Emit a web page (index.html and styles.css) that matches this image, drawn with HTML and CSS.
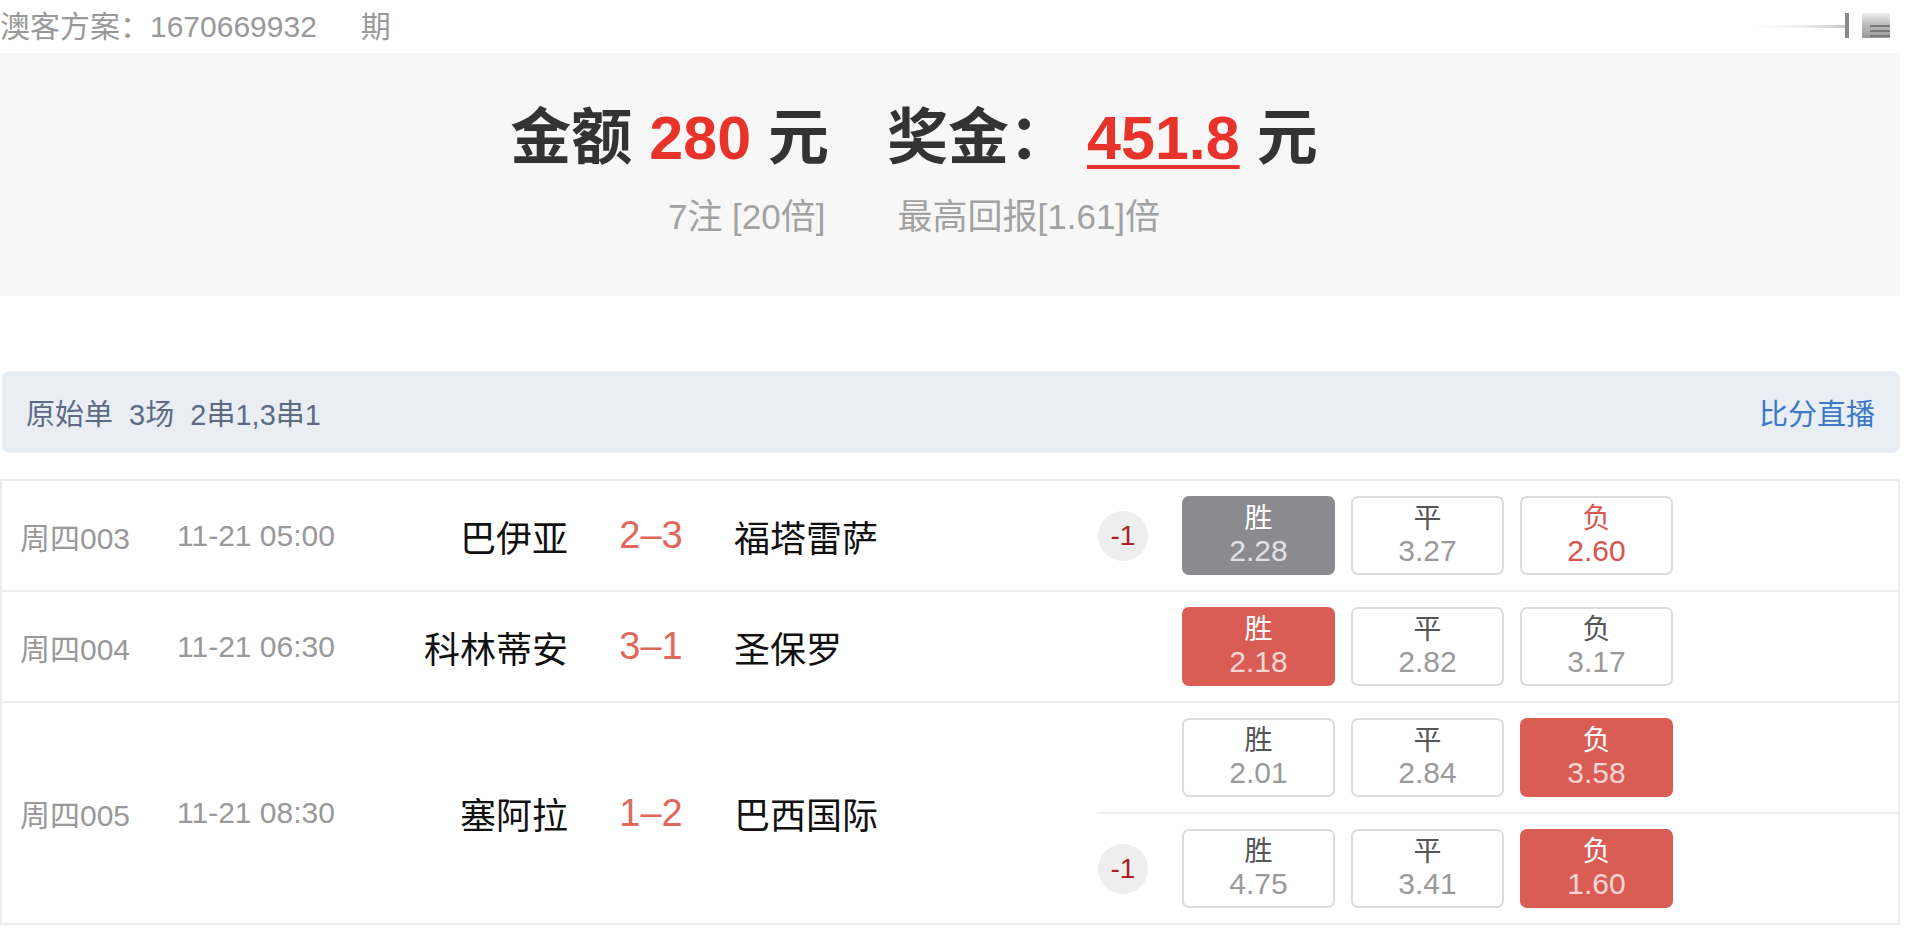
FILE: index.html
```html
<!DOCTYPE html>
<html lang="zh-CN">
<head>
<meta charset="utf-8">
<title>澳客方案</title>
<link rel="stylesheet" href="styles.css">
</head>
<body>
<div class="page">
  <div class="topbar">
    <span class="plan">澳客方案：1670669932</span><span class="period">期</span>
    <svg class="corner-icon" width="160" height="40" viewBox="0 0 160 40" aria-hidden="true">
      <defs>
        <linearGradient id="fade" x1="0" x2="1" y1="0" y2="0">
          <stop offset="0" stop-color="#ffffff" stop-opacity="0"/>
          <stop offset="1" stop-color="#c8c8c8"/>
        </linearGradient>
        <linearGradient id="blk" x1="0" x2="0" y1="0" y2="1">
          <stop offset="0" stop-color="#f0f0f0"/>
          <stop offset="0.45" stop-color="#bdbdbd"/>
          <stop offset="1" stop-color="#9a9a9a"/>
        </linearGradient>
      </defs>
      <rect x="0" y="25" width="103" height="3" fill="url(#fade)"/>
      <rect x="103" y="13" width="4" height="25" fill="#8a8a8a"/>
      <rect x="120" y="13" width="28" height="25" fill="url(#blk)"/>
      <rect x="128" y="25" width="20" height="2" fill="#7a7a7a"/>
      <rect x="128" y="30" width="20" height="2" fill="#7a7a7a"/>
      <rect x="128" y="35" width="20" height="2" fill="#7a7a7a"/>
    </svg>
  </div>

  <section class="summary">
    <div class="title">
      <span>金额</span> <span class="red">280</span> <span>元</span><span class="prize">奖金：</span> <span class="red under">451.8</span> <span>元</span>
    </div>
    <div class="sub">
      <span>7注 [20倍]</span><span class="ret">最高回报[1.61]倍</span>
    </div>
  </section>

  <div class="bar">
    <span class="bar-title">原始单&nbsp;&nbsp;3场&nbsp;&nbsp;2串1,3串1</span>
    <span class="bar-link">比分直播</span>
  </div>

  <div class="table">
    <div class="row">
      <div class="info">
        <span class="lbl">周四003</span>
        <span class="lbl">11-21 05:00</span>
        <span class="home">巴伊亚</span>
        <span class="score">2–3</span>
        <span class="away">福塔雷萨</span>
      </div>
      <div class="odds">
        <div class="line">
          <span class="badge">-1</span>
          <div class="btns">
            <div class="btn sel-gray"><span class="k">胜</span><span class="v">2.28</span></div>
            <div class="btn"><span class="k">平</span><span class="v">3.27</span></div>
            <div class="btn hit"><span class="k">负</span><span class="v">2.60</span></div>
          </div>
        </div>
      </div>
    </div>

    <div class="row">
      <div class="info">
        <span class="lbl">周四004</span>
        <span class="lbl">11-21 06:30</span>
        <span class="home">科林蒂安</span>
        <span class="score">3–1</span>
        <span class="away">圣保罗</span>
      </div>
      <div class="odds">
        <div class="line">
          <span class="badge empty"></span>
          <div class="btns">
            <div class="btn sel-red"><span class="k">胜</span><span class="v">2.18</span></div>
            <div class="btn"><span class="k">平</span><span class="v">2.82</span></div>
            <div class="btn"><span class="k">负</span><span class="v">3.17</span></div>
          </div>
        </div>
      </div>
    </div>

    <div class="row">
      <div class="info">
        <span class="lbl">周四005</span>
        <span class="lbl">11-21 08:30</span>
        <span class="home">塞阿拉</span>
        <span class="score">1–2</span>
        <span class="away">巴西国际</span>
      </div>
      <div class="odds">
        <div class="line">
          <span class="badge empty"></span>
          <div class="btns">
            <div class="btn"><span class="k">胜</span><span class="v">2.01</span></div>
            <div class="btn"><span class="k">平</span><span class="v">2.84</span></div>
            <div class="btn sel-red"><span class="k">负</span><span class="v">3.58</span></div>
          </div>
        </div>
        <div class="line">
          <span class="badge">-1</span>
          <div class="btns">
            <div class="btn"><span class="k">胜</span><span class="v">4.75</span></div>
            <div class="btn"><span class="k">平</span><span class="v">3.41</span></div>
            <div class="btn sel-red"><span class="k">负</span><span class="v">1.60</span></div>
          </div>
        </div>
      </div>
    </div>
  </div>
</div>
</body>
</html>
```

FILE: styles.css
```css
html, body {
  margin: 0;
  padding: 0;
  background: #ffffff;
}

body {
  font-family: "Liberation Sans", "Noto Sans CJK SC", sans-serif;
  color: #333;
}

.page {
  width: 1900px;
  position: relative;
}

.topbar {
  height: 53px;
  display: flex;
  align-items: center;
  font-size: 30px;
  color: #999;
  line-height: 53px;
}

.period {
  margin-left: 44px;
}

.corner-icon {
  position: absolute;
  top: 0;
  right: -2px;
}

.summary {
  background: #f7f7f7;
  height: 243px;
  box-sizing: border-box;
  padding: 50px 72px 0 0;
  text-align: center;
}

.title {
  font-size: 61px;
  font-weight: bold;
  line-height: 70px;
  color: #333;
  white-space: nowrap;
}

.red {
  color: #e7332a;
}

.under {
  text-decoration: underline;
  text-decoration-color: #e7332a;
  text-decoration-thickness: 4px;
  text-underline-offset: 6px;
}

.prize {
  margin-left: 58px;
}

.sub {
  margin-top: 23px;
  font-size: 35px;
  line-height: 42px;
  color: #a2a2a2;
  white-space: nowrap;
}

.ret {
  margin-left: 72px;
}

.bar {
  margin-top: 75px;
  height: 82px;
  background: #e9eef5;
  border-radius: 8px;
  margin-left: 2px;
  display: flex;
  align-items: center;
  justify-content: space-between;
  padding: 0 25px 0 24px;
  box-sizing: border-box;
  font-size: 29px;
}

.bar-title {
  color: #5d6b82;
}

.bar-link {
  color: #3b78c9;
}

.table {
  margin-top: 26px;
  border: 2px solid #ededed;
  margin-left: 0;
}

.row {
  display: flex;
  border-top: 2px solid #ededed;
}

.row:first-child {
  border-top: none;
}

.info {
  flex: 0 0 1095px;
  box-sizing: border-box;
  padding-left: 18px;
  display: grid;
  grid-template-columns: 157px 223px 168px 166px 1fr;
  align-items: center;
  white-space: nowrap;
}

.lbl {
  font-size: 30px;
  color: #999;
}

.home {
  font-size: 36px;
  color: #111;
  text-align: right;
}

.score {
  font-size: 38px;
  color: #e0675a;
  text-align: center;
}

.away {
  font-size: 36px;
  color: #111;
}

.odds {
  flex: 1;
  display: flex;
  flex-direction: column;
}

.line {
  height: 109px;
  display: flex;
  align-items: center;
}

.line + .line {
  border-top: 2px solid #ededed;
}

.badge {
  width: 50px;
  height: 50px;
  margin-left: 1px;
  border-radius: 50%;
  background: #eeeeee;
  color: #a8231f;
  font-size: 28px;
  display: flex;
  align-items: center;
  justify-content: center;
  flex: 0 0 auto;
}

.badge.empty {
  background: transparent;
}

.btns {
  display: flex;
  gap: 16px;
  margin-left: 34px;
}

.btn {
  width: 153px;
  height: 79px;
  box-sizing: border-box;
  border: 2px solid #dcdcdc;
  border-radius: 7px;
  background: #fff;
  display: flex;
  flex-direction: column;
  align-items: center;
  justify-content: center;
  padding-bottom: 2px;
  font-size: 28px;
  line-height: 32px;
}

.btn .k {
  color: #555;
}

.btn .v {
  color: #9a9a9a;
  font-size: 30px;
}

.btn.hit .k,
.btn.hit .v {
  color: #d9534f;
}

.btn.sel-gray {
  background: #8b8b8f;
  border-color: #8b8b8f;
}

.btn.sel-gray .k {
  color: #ffffff;
}

.btn.sel-gray .v {
  color: #e2e2e4;
}

.btn.sel-red {
  background: #d95d55;
  border-color: #d95d55;
}

.btn.sel-red .k {
  color: #ffffff;
}

.btn.sel-red .v {
  color: #f8d6d2;
}
```
